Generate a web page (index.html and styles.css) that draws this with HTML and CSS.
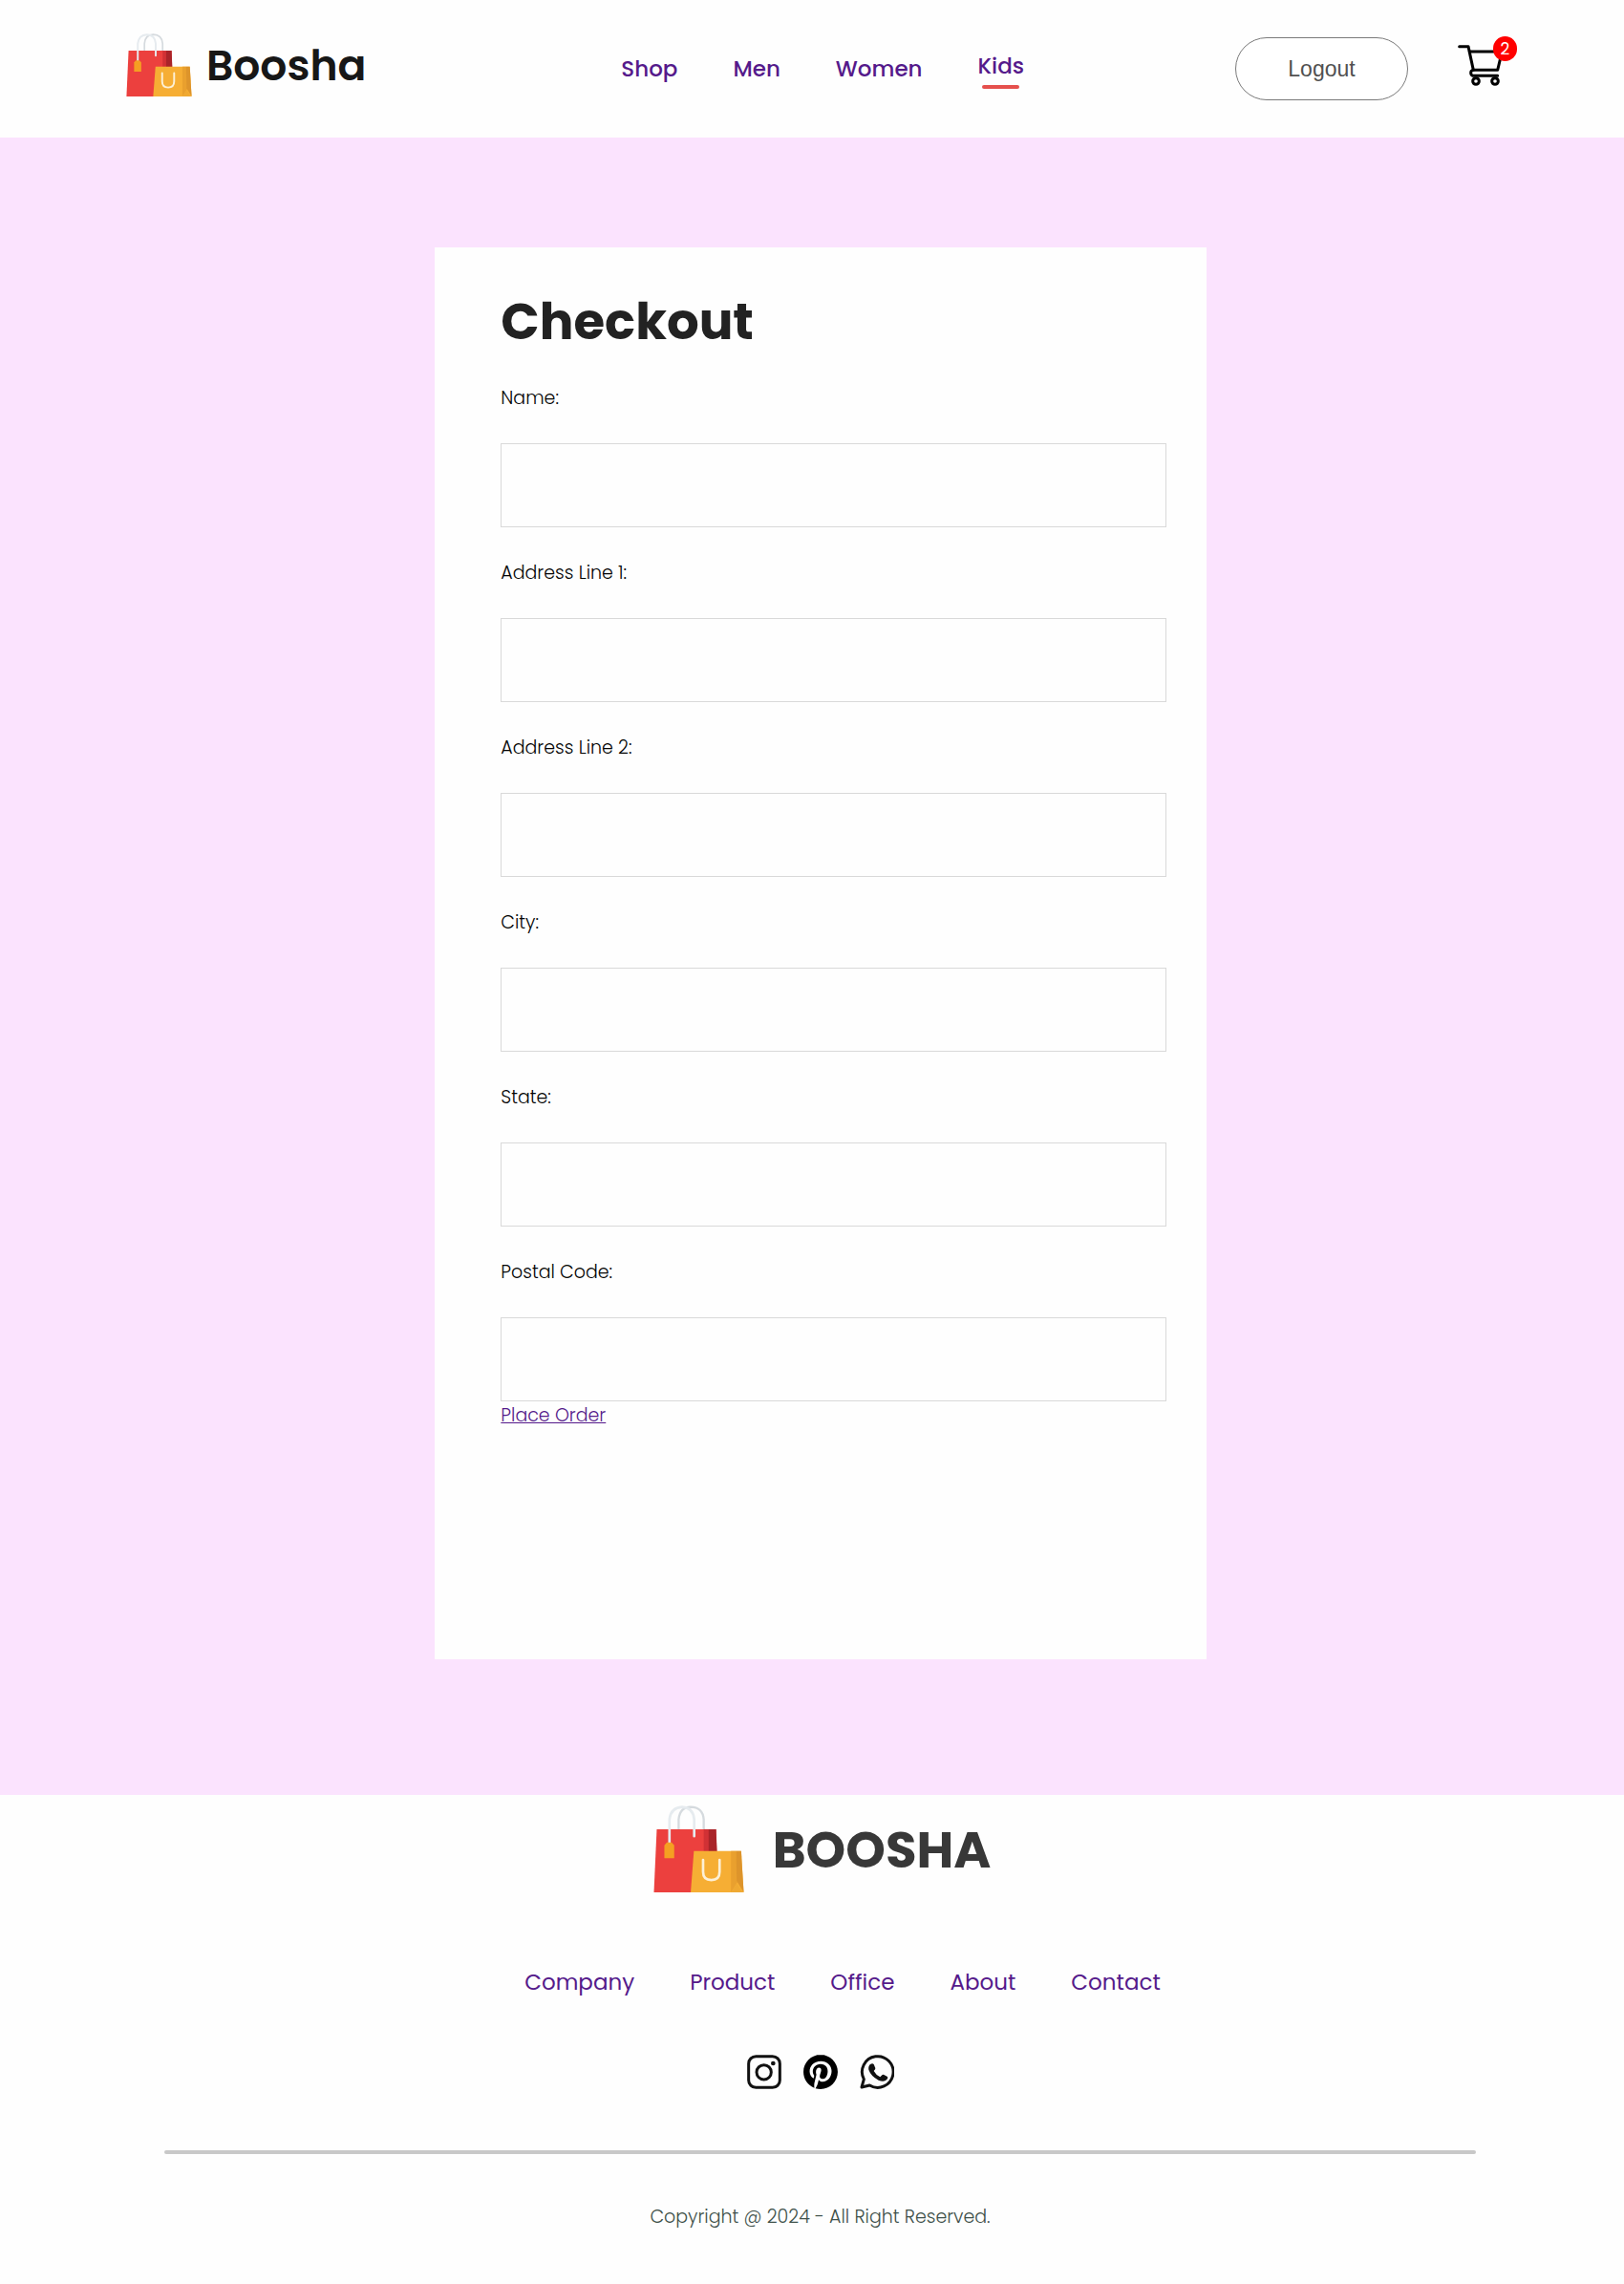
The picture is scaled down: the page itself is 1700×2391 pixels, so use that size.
FILE: index.html
```
<!DOCTYPE html>
<html lang="en">
<head>
<meta charset="utf-8">
<meta name="viewport" content="width=device-width, initial-scale=1">
<title>Boosha - Checkout</title>
<link rel="stylesheet" href="styles.css">
</head>
<body>
<svg class="sprite" aria-hidden="true">
  <symbol id="bags" viewBox="77 88 283 274">
    <path d="M155 166V132q4-39 38-39q38 1 41 39v34" fill="none" stroke="#d5dade" stroke-width="7"/>
    <path d="M86 163H273L279 362H77z" fill="#ec403e"/>
    <path d="M234 163h15v70h-15z" fill="#d13135"/>
    <path d="M249 163h24l3 70h-27z" fill="#a92429"/>
    <path d="M203 232H352L360 362H193z" fill="#f6ae34"/>
    <path d="M320 232h16l4 98-20 32z" fill="#e9a02e"/>
    <path d="M336 232h16l8 130-22-36z" fill="#dd942b"/>
    <path d="M338 334l-16 28h34z" fill="#efa933"/>
    <path d="M232 260v37q0 26 26 26t26-26v-37" fill="none" stroke="#fdf0d5" stroke-width="8" stroke-linecap="round"/>
    <path d="M126 212V132q4-37 40-39q35 2 38 39v53" fill="none" stroke="#e6ebef" stroke-width="8" stroke-linecap="round"/>
    <path d="M118 205h15l8 9v40h-31v-40z" fill="#f59f22"/>
  </symbol>
</svg>

<header class="header">
  <a class="brand" href="#">
    <svg class="brand-mark" aria-hidden="true"><use href="#bags"/></svg>
    <span class="brand-name">Boosha</span>
  </a>
  <nav class="nav" aria-label="Main">
    <a class="nav-link" href="#">Shop</a>
    <a class="nav-link" href="#">Men</a>
    <a class="nav-link" href="#">Women</a>
    <a class="nav-link nav-link-active" href="#" aria-current="page">Kids</a>
  </nav>
  <div class="actions">
    <button class="logout" type="button">Logout</button>
    <a class="cart" href="#" aria-label="Cart, 2 items">
      <svg class="cart-icon" viewBox="798 78 142 132" fill="none" stroke="#000" stroke-width="9" stroke-linecap="round" stroke-linejoin="round" aria-hidden="true">
        <path d="M802 86h28l16 74"/>
        <path d="M834 102h102l-14 58h-78q-6 2-6 9t6 9h78"/>
        <circle cx="854" cy="195" r="10"/>
        <circle cx="914" cy="195" r="10"/>
      </svg>
      <span class="cart-count">2</span>
    </a>
  </div>
</header>

<main class="checkout">
  <form class="card">
    <h1 class="title">Checkout</h1>
    <div class="field"><label class="label" for="name">Name:</label><input class="input" id="name" type="text"></div>
    <div class="field"><label class="label" for="address1">Address Line 1:</label><input class="input" id="address1" type="text"></div>
    <div class="field"><label class="label" for="address2">Address Line 2:</label><input class="input" id="address2" type="text"></div>
    <div class="field"><label class="label" for="city">City:</label><input class="input" id="city" type="text"></div>
    <div class="field"><label class="label" for="state">State:</label><input class="input" id="state" type="text"></div>
    <div class="field"><label class="label" for="postal">Postal Code:</label><input class="input" id="postal" type="text"></div>
    <a class="place-order" href="#">Place Order</a>
  </form>
</main>

<footer class="footer">
  <div class="footer-brand">
    <svg class="footer-mark" aria-hidden="true"><use href="#bags"/></svg>
    <span class="footer-name">BOOSHA</span>
  </div>
  <nav class="footer-nav" aria-label="Footer">
    <a class="footer-link" href="#">Company</a>
    <a class="footer-link" href="#">Product</a>
    <a class="footer-link" href="#">Office</a>
    <a class="footer-link" href="#">About</a>
    <a class="footer-link" href="#">Contact</a>
  </nav>
  <div class="social">
    <a href="#" aria-label="Instagram">
      <svg class="social-icon" viewBox="0 0 108 108" fill="none" stroke="#111" stroke-width="9">
        <rect x="5" y="5" width="98" height="98" rx="23"/>
        <circle cx="53" cy="55" r="23"/>
        <circle cx="82" cy="27" r="7" fill="#111" stroke="none"/>
      </svg>
    </a>
    <a href="#" aria-label="Pinterest">
      <svg class="social-icon" viewBox="0 0 24 24">
        <path d="M12.017 0C5.396 0 .029 5.367.029 11.987c0 5.079 3.158 9.417 7.618 11.162-.105-.949-.199-2.403.041-3.439.219-.937 1.406-5.957 1.406-5.957s-.359-.72-.359-1.781c0-1.663.967-2.911 2.168-2.911 1.024 0 1.518.769 1.518 1.688 0 1.029-.653 2.567-.992 3.992-.285 1.193.6 2.165 1.775 2.165 2.128 0 3.768-2.245 3.768-5.487 0-2.861-2.063-4.869-5.008-4.869-3.41 0-5.409 2.562-5.409 5.199 0 1.033.394 2.143.889 2.741.099.12.112.225.085.345-.09.375-.293 1.199-.334 1.363-.053.225-.172.271-.401.165-1.495-.69-2.433-2.878-2.433-4.646 0-3.776 2.748-7.252 7.92-7.252 4.158 0 7.392 2.967 7.392 6.923 0 4.135-2.607 7.462-6.233 7.462-1.214 0-2.354-.629-2.758-1.379l-.749 2.848c-.269 1.045-1.004 2.352-1.498 3.146 1.123.345 2.306.535 3.55.535 6.607 0 11.985-5.365 11.985-11.987C23.97 5.39 18.592.026 11.985.026z"/>
      </svg>
    </a>
    <a href="#" aria-label="WhatsApp">
      <svg class="social-icon" viewBox="0 0 108 108">
        <path d="M6 102L13 77A49 49 0 1 1 31 96z" fill="none" stroke="#111" stroke-width="9" stroke-linejoin="round"/>
        <path d="M33 30q7-5 11 0l5 12q1 3-5 9 7 13 20 19l7-7q2-2 5 0l11 6q3 3-2 9-9 9-26 2Q35 67 28 47q-2-11 5-17z" fill="#111"/>
      </svg>
    </a>
  </div>
  <hr class="rule">
  <p class="copyright">Copyright @ 2024 - All Right Reserved.</p>
</footer>
</body>
</html>
```
FILE: styles.css
```
* {
  box-sizing: border-box;
}

body {
  margin: 0;
  background: #fefefe;
  color: #050505;
  font-family: Poppins, Inter, "Noto Sans", sans-serif;
  font-size: 19px;
  font-weight: 300;
  line-height: 30px;
}

.sprite {
  display: none;
}

.header {
  display: flex;
  justify-content: space-between;
  align-items: center;
  min-height: 144px;
  padding: 0 112px 0 132px;
}

.brand {
  display: flex;
  gap: 15px;
  align-items: center;
  padding-right: 46px;
  padding-bottom: 8px;
  color: #171717;
  text-decoration: none;
}

.brand-mark {
  width: 69px;
  height: 66px;
}

.brand-name {
  padding-top: 2px;
  font-size: 44px;
  font-weight: 600;
  line-height: 66px;
}

.nav {
  display: flex;
  gap: 58px;
  align-items: center;
}

.nav-link {
  display: flex;
  flex-direction: column;
  gap: 2px;
  align-items: center;
  color: #551a8b;
  font-size: 23px;
  font-weight: 500;
  line-height: 36px;
  text-decoration: none;
}

.nav-link-active::after {
  width: 80%;
  height: 4px;
  border-radius: 4px;
  background: #e5504d;
  content: "";
}

.actions {
  display: flex;
  gap: 52px;
  align-items: center;
}

.logout {
  width: 181px;
  height: 66px;
  border: 1px solid #7a7a7a;
  border-radius: 33px;
  background: #fff;
  color: #515151;
  font-family: "Liberation Sans", Arial, sans-serif;
  font-size: 23px;
}

.cart {
  position: relative;
  width: 62px;
  padding-bottom: 8px;
}

.cart-icon {
  display: block;
  width: 48px;
  height: 44px;
}

.cart-count {
  position: absolute;
  top: -8px;
  right: 0;
  width: 25px;
  height: 26px;
  border-radius: 13px;
  background: #f00;
  color: #fff;
  font-size: 17px;
  font-weight: 400;
  line-height: 26px;
  text-align: center;
}

.checkout {
  padding: 115px 0 142px 18px;
  background: #fbe3fe;
}

.card {
  width: 48%;
  min-height: 1478px;
  margin: 0 auto;
  padding: 40px 42px 60px 69px;
  background: #fefefe;
}

.title {
  margin: 0;
  color: #222;
  font-size: 53px;
  font-weight: 700;
  line-height: 76px;
}

.field {
  display: flex;
  flex-direction: column;
  gap: 32px;
  padding-top: 33px;
}

.title + .field {
  padding-top: 27px;
}

.input {
  width: 100%;
  height: 88px;
  padding: 0 20px;
  border: 1px solid #d9d9d9;
  border-radius: 0;
  background: #fefefe;
  font: inherit;
}

.place-order {
  color: #551a8b;
  line-height: 28px;
}

.footer {
  display: flex;
  flex-direction: column;
  align-items: center;
  padding: 11px 0 54px 17px;
}

.footer-brand {
  display: flex;
  gap: 30px;
  align-items: center;
  padding-left: 4px;
}

.footer-mark {
  width: 95px;
  height: 91px;
}

.footer-name {
  padding-top: 2px;
  color: #383838;
  font-size: 53px;
  font-weight: 700;
  line-height: 80px;
}

.footer-nav {
  display: flex;
  gap: 58px;
  padding: 76px 0 58px 47px;
}

.footer-link {
  color: #551a8b;
  font-size: 23px;
  font-weight: 400;
  line-height: 36px;
  text-decoration: none;
}

.social {
  display: flex;
  gap: 23px;
}

.social-icon {
  display: block;
  width: 36px;
  height: 36px;
}

.rule {
  width: calc(100% - 310px);
  height: 4px;
  margin: 64px 0 51px;
  border: 0;
  border-radius: 2px;
  background: #c8c8c8;
}

.copyright {
  margin: 0;
  color: #3f514a;
}
```
